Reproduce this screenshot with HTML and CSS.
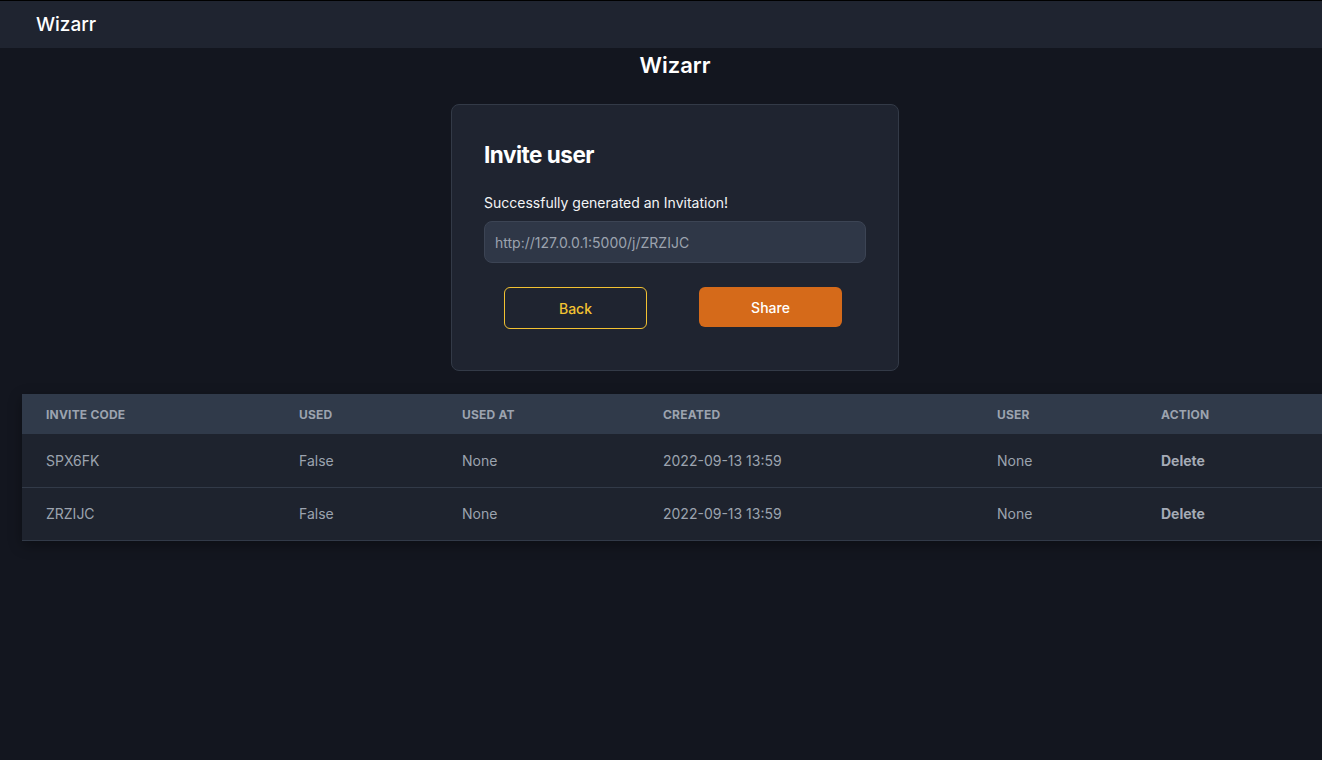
FILE: index.html
```html
<!DOCTYPE html>
<html lang="en">
<head>
<meta charset="utf-8">
<title>Wizarr</title>
<link rel="stylesheet" href="styles.css">
</head>
<body>
<nav class="navbar"><span class="brand">Wizarr</span></nav>
<main class="main">
  <h1 class="page-title">Wizarr</h1>
  <section class="card">
    <h2 class="card-title">Invite user</h2>
    <p class="card-msg">Successfully generated an Invitation!</p>
    <div class="url-box">http://127.0.0.1:5000/j/ZRZIJC</div>
    <div class="btn-row">
      <button class="btn btn-back">Back</button>
      <button class="btn btn-share">Share</button>
    </div>
  </section>
  <div class="table-wrap">
    <table class="invites">
      <thead>
        <tr>
          <th class="c1">Invite Code</th>
          <th class="c2">Used</th>
          <th class="c3">Used At</th>
          <th class="c4">Created</th>
          <th class="c5">User</th>
          <th class="c6">Action</th>
        </tr>
      </thead>
      <tbody>
        <tr>
          <td>SPX6FK</td><td>False</td><td>None</td><td>2022-09-13 13:59</td><td>None</td><td class="action">Delete</td>
        </tr>
        <tr>
          <td>ZRZIJC</td><td>False</td><td>None</td><td>2022-09-13 13:59</td><td>None</td><td class="action">Delete</td>
        </tr>
      </tbody>
    </table>
  </div>
</main>
</body>
</html>
```
FILE: styles.css
```css
* { box-sizing: border-box; }
html, body { margin: 0; padding: 0; }
body {
  background: #13161f;
  font-family: Inter, "Noto Sans", sans-serif;
  color: #fff;
  overflow: hidden;
  min-height: 760px;
}
.navbar {
  height: 48px;
  background: #1f2430;
  border-top: 1px solid #000;
  display: flex;
  align-items: center;
  padding-left: 36px;
}
.brand {
  font-size: 19px;
  font-weight: 500;
  color: #fff;
}
.main {
  width: 1350px;
  display: flex;
  flex-direction: column;
  align-items: center;
}
.page-title {
  margin: 1px 0 0;
  font-size: 22px;
  font-weight: 600;
  line-height: 32px;
  text-align: center;
}
.card {
  margin-top: 23px;
  width: 448px;
  background: #1f2430;
  border: 1px solid #333a47;
  border-radius: 8px;
  padding: 35px 32px 41px;
}
.card-title {
  margin: 0;
  font-size: 22.5px;
  font-weight: 700;
  line-height: 30px;
  letter-spacing: -0.5px;
}
.card-msg {
  margin: 24px 0 0;
  font-size: 14px;
  line-height: 18px;
  color: #f3f4f6;
}
.url-box {
  margin-top: 9px;
  height: 42px;
  background: #2f3747;
  border: 1px solid #3c4454;
  border-radius: 8px;
  padding: 0 10px;
  display: flex;
  align-items: center;
  font-size: 14px;
  color: #9ca3af;
}
.btn-row {
  margin-top: 24px;
  display: flex;
  justify-content: center;
  gap: 52px;
  padding-right: 4px;
}
.btn {
  width: 143px;
  border-radius: 6px;
  font-family: inherit;
  font-size: 14px;
  font-weight: 500;
  cursor: pointer;
}
.btn-back {
  height: 42px;
  background: transparent;
  border: 1px solid #f2c232;
  color: #f2c232;
}
.btn-share {
  height: 40px;
  background: #d56a1a;
  border: none;
  color: #fff;
}
.table-wrap {
  align-self: stretch;
  margin: 23px 22px 0 22px;
  box-shadow: 0 4px 12px rgba(0,0,0,0.35);
}
.invites {
  width: 100%;
  border-collapse: collapse;
  table-layout: fixed;
  font-size: 14px;
}
.invites th {
  background: #303a4a;
  color: #9ca3af;
  font-size: 12px;
  font-weight: 700;
  text-transform: uppercase;
  text-align: left;
  height: 40px;
  padding: 0 24px;
  letter-spacing: 0.2px;
}
.invites td {
  background: #1e232e;
  color: #9ca3af;
  height: 53px;
  padding: 0 24px;
  border-bottom: 1px solid #323a48;
}
.invites td.action {
  font-weight: 700;
  color: #a5abb6;
}
.c1 { width: 253px; }
.c2 { width: 163px; }
.c3 { width: 201px; }
.c4 { width: 334px; }
.c5 { width: 164px; }
```
